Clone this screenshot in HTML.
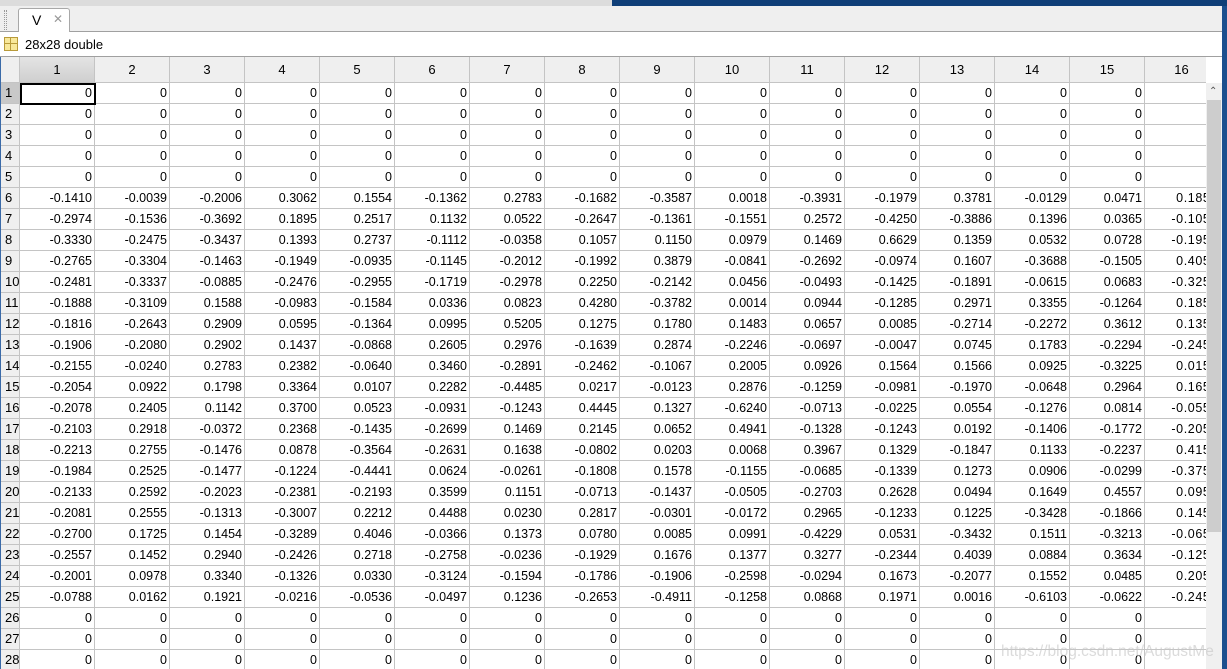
<!DOCTYPE html>
<html><head><meta charset="utf-8"><style>
*{margin:0;padding:0;box-sizing:border-box}
body{width:1227px;height:669px;overflow:hidden;background:#fff;font-family:"Liberation Sans",sans-serif;font-size:12px;color:#000;position:relative}
#top{position:absolute;left:0;top:0;width:1227px;height:6px;background:#0f3f78}
#top .l{position:absolute;left:0;top:0;width:612px;height:6px;background:#dcdcdc}
#tabbar{position:absolute;left:0;top:6px;width:1227px;height:26px;background:#efefef;border-bottom:1px solid #a0a0a0}
#tab{position:absolute;left:18px;top:2px;width:52px;height:25px;background:#fff;border:1px solid #a8a8a8;border-bottom:none;border-radius:3px 3px 0 0;font-size:14px}
#info{position:absolute;left:0;top:32px;width:1227px;height:25px;background:#fff;border-bottom:1px solid #a0a0a0;font-size:13px}
#grid{position:absolute;left:0;top:57px;width:1206px;height:612px;overflow:hidden}
.r{height:21px;white-space:nowrap;display:flex}
.r>div{flex:none;width:75px;height:21px;border-right:1px solid #c4c4c4;border-bottom:1px solid #c4c4c4;text-align:right;padding-right:2px;line-height:20px;overflow:hidden;font-size:12.5px}
.r>div:first-child{width:20px;background:#efefef;text-align:left;padding:0 0 0 5px;font-size:13px}
.h{height:26px}
.h>div{height:26px;background:#efefef;text-align:center;padding:0;line-height:26px;font-size:13px}
.h>div.s{background:linear-gradient(#e4e4e4,#cfcfcf)}
.r>div.sr{background:#c8c8c8}
.r>div:last-child{padding-right:1px;letter-spacing:0.6px}
.h>div:last-child{letter-spacing:0}
#sel{position:absolute;left:20px;top:83px;width:76px;height:22px;border:2px solid #000}
#sb{position:absolute;left:1206px;top:83px;width:16px;height:586px;background:#f0f0f0}
#thumb{position:absolute;left:1207px;top:100px;width:14px;height:432px;background:#cdcdcd}
#rb{position:absolute;left:1222px;top:6px;width:5px;height:663px;background:#1c4f8e}
#lb{position:absolute;left:0;top:57px;width:1px;height:612px;background:#3a6aa8}
#wm{position:absolute;left:1001px;top:643px;font-size:15.5px;color:rgba(200,200,200,.65)}
</style></head><body>
<div id="top"><div class="l"></div></div>
<div id="tabbar"><div style="position:absolute;left:4px;top:4px;width:3px;height:20px;border-left:1px dotted #999;border-right:1px dotted #999"></div>
<div id="tab"><span style="position:absolute;left:13px;top:3px">V</span><span style="position:absolute;left:34px;top:3px;color:#999;font-size:12px">✕</span></div></div>
<div id="info"><div style="position:absolute;left:4px;top:5px;width:14px;height:14px;background:#f8e89a;border:1px solid #b89a3a"><div style="position:absolute;left:5px;top:0;width:1px;height:12px;background:#b89a3a"></div><div style="position:absolute;left:0;top:5px;width:12px;height:1px;background:#b89a3a"></div></div><span style="position:absolute;left:25px;top:5px">28x28 double</span></div>
<div id="grid">
<div class="r h"><div></div><div class="s">1</div><div>2</div><div>3</div><div>4</div><div>5</div><div>6</div><div>7</div><div>8</div><div>9</div><div>10</div><div>11</div><div>12</div><div>13</div><div>14</div><div>15</div><div>16</div></div>
<div class="r"><div class="sr">1</div><div>0</div><div>0</div><div>0</div><div>0</div><div>0</div><div>0</div><div>0</div><div>0</div><div>0</div><div>0</div><div>0</div><div>0</div><div>0</div><div>0</div><div>0</div><div>0</div></div>
<div class="r"><div>2</div><div>0</div><div>0</div><div>0</div><div>0</div><div>0</div><div>0</div><div>0</div><div>0</div><div>0</div><div>0</div><div>0</div><div>0</div><div>0</div><div>0</div><div>0</div><div>0</div></div>
<div class="r"><div>3</div><div>0</div><div>0</div><div>0</div><div>0</div><div>0</div><div>0</div><div>0</div><div>0</div><div>0</div><div>0</div><div>0</div><div>0</div><div>0</div><div>0</div><div>0</div><div>0</div></div>
<div class="r"><div>4</div><div>0</div><div>0</div><div>0</div><div>0</div><div>0</div><div>0</div><div>0</div><div>0</div><div>0</div><div>0</div><div>0</div><div>0</div><div>0</div><div>0</div><div>0</div><div>0</div></div>
<div class="r"><div>5</div><div>0</div><div>0</div><div>0</div><div>0</div><div>0</div><div>0</div><div>0</div><div>0</div><div>0</div><div>0</div><div>0</div><div>0</div><div>0</div><div>0</div><div>0</div><div>0</div></div>
<div class="r"><div>6</div><div>-0.1410</div><div>-0.0039</div><div>-0.2006</div><div>0.3062</div><div>0.1554</div><div>-0.1362</div><div>0.2783</div><div>-0.1682</div><div>-0.3587</div><div>0.0018</div><div>-0.3931</div><div>-0.1979</div><div>0.3781</div><div>-0.0129</div><div>0.0471</div><div>0.1850</div></div>
<div class="r"><div>7</div><div>-0.2974</div><div>-0.1536</div><div>-0.3692</div><div>0.1895</div><div>0.2517</div><div>0.1132</div><div>0.0522</div><div>-0.2647</div><div>-0.1361</div><div>-0.1551</div><div>0.2572</div><div>-0.4250</div><div>-0.3886</div><div>0.1396</div><div>0.0365</div><div>-0.1050</div></div>
<div class="r"><div>8</div><div>-0.3330</div><div>-0.2475</div><div>-0.3437</div><div>0.1393</div><div>0.2737</div><div>-0.1112</div><div>-0.0358</div><div>0.1057</div><div>0.1150</div><div>0.0979</div><div>0.1469</div><div>0.6629</div><div>0.1359</div><div>0.0532</div><div>0.0728</div><div>-0.1950</div></div>
<div class="r"><div>9</div><div>-0.2765</div><div>-0.3304</div><div>-0.1463</div><div>-0.1949</div><div>-0.0935</div><div>-0.1145</div><div>-0.2012</div><div>-0.1992</div><div>0.3879</div><div>-0.0841</div><div>-0.2692</div><div>-0.0974</div><div>0.1607</div><div>-0.3688</div><div>-0.1505</div><div>0.4050</div></div>
<div class="r"><div>10</div><div>-0.2481</div><div>-0.3337</div><div>-0.0885</div><div>-0.2476</div><div>-0.2955</div><div>-0.1719</div><div>-0.2978</div><div>0.2250</div><div>-0.2142</div><div>0.0456</div><div>-0.0493</div><div>-0.1425</div><div>-0.1891</div><div>-0.0615</div><div>0.0683</div><div>-0.3250</div></div>
<div class="r"><div>11</div><div>-0.1888</div><div>-0.3109</div><div>0.1588</div><div>-0.0983</div><div>-0.1584</div><div>0.0336</div><div>0.0823</div><div>0.4280</div><div>-0.3782</div><div>0.0014</div><div>0.0944</div><div>-0.1285</div><div>0.2971</div><div>0.3355</div><div>-0.1264</div><div>0.1850</div></div>
<div class="r"><div>12</div><div>-0.1816</div><div>-0.2643</div><div>0.2909</div><div>0.0595</div><div>-0.1364</div><div>0.0995</div><div>0.5205</div><div>0.1275</div><div>0.1780</div><div>0.1483</div><div>0.0657</div><div>0.0085</div><div>-0.2714</div><div>-0.2272</div><div>0.3612</div><div>0.1350</div></div>
<div class="r"><div>13</div><div>-0.1906</div><div>-0.2080</div><div>0.2902</div><div>0.1437</div><div>-0.0868</div><div>0.2605</div><div>0.2976</div><div>-0.1639</div><div>0.2874</div><div>-0.2246</div><div>-0.0697</div><div>-0.0047</div><div>0.0745</div><div>0.1783</div><div>-0.2294</div><div>-0.2450</div></div>
<div class="r"><div>14</div><div>-0.2155</div><div>-0.0240</div><div>0.2783</div><div>0.2382</div><div>-0.0640</div><div>0.3460</div><div>-0.2891</div><div>-0.2462</div><div>-0.1067</div><div>0.2005</div><div>0.0926</div><div>0.1564</div><div>0.1566</div><div>0.0925</div><div>-0.3225</div><div>0.0150</div></div>
<div class="r"><div>15</div><div>-0.2054</div><div>0.0922</div><div>0.1798</div><div>0.3364</div><div>0.0107</div><div>0.2282</div><div>-0.4485</div><div>0.0217</div><div>-0.0123</div><div>0.2876</div><div>-0.1259</div><div>-0.0981</div><div>-0.1970</div><div>-0.0648</div><div>0.2964</div><div>0.1650</div></div>
<div class="r"><div>16</div><div>-0.2078</div><div>0.2405</div><div>0.1142</div><div>0.3700</div><div>0.0523</div><div>-0.0931</div><div>-0.1243</div><div>0.4445</div><div>0.1327</div><div>-0.6240</div><div>-0.0713</div><div>-0.0225</div><div>0.0554</div><div>-0.1276</div><div>0.0814</div><div>-0.0550</div></div>
<div class="r"><div>17</div><div>-0.2103</div><div>0.2918</div><div>-0.0372</div><div>0.2368</div><div>-0.1435</div><div>-0.2699</div><div>0.1469</div><div>0.2145</div><div>0.0652</div><div>0.4941</div><div>-0.1328</div><div>-0.1243</div><div>0.0192</div><div>-0.1406</div><div>-0.1772</div><div>-0.2050</div></div>
<div class="r"><div>18</div><div>-0.2213</div><div>0.2755</div><div>-0.1476</div><div>0.0878</div><div>-0.3564</div><div>-0.2631</div><div>0.1638</div><div>-0.0802</div><div>0.0203</div><div>0.0068</div><div>0.3967</div><div>0.1329</div><div>-0.1847</div><div>0.1133</div><div>-0.2237</div><div>0.4150</div></div>
<div class="r"><div>19</div><div>-0.1984</div><div>0.2525</div><div>-0.1477</div><div>-0.1224</div><div>-0.4441</div><div>0.0624</div><div>-0.0261</div><div>-0.1808</div><div>0.1578</div><div>-0.1155</div><div>-0.0685</div><div>-0.1339</div><div>0.1273</div><div>0.0906</div><div>-0.0299</div><div>-0.3750</div></div>
<div class="r"><div>20</div><div>-0.2133</div><div>0.2592</div><div>-0.2023</div><div>-0.2381</div><div>-0.2193</div><div>0.3599</div><div>0.1151</div><div>-0.0713</div><div>-0.1437</div><div>-0.0505</div><div>-0.2703</div><div>0.2628</div><div>0.0494</div><div>0.1649</div><div>0.4557</div><div>0.0950</div></div>
<div class="r"><div>21</div><div>-0.2081</div><div>0.2555</div><div>-0.1313</div><div>-0.3007</div><div>0.2212</div><div>0.4488</div><div>0.0230</div><div>0.2817</div><div>-0.0301</div><div>-0.0172</div><div>0.2965</div><div>-0.1233</div><div>0.1225</div><div>-0.3428</div><div>-0.1866</div><div>0.1450</div></div>
<div class="r"><div>22</div><div>-0.2700</div><div>0.1725</div><div>0.1454</div><div>-0.3289</div><div>0.4046</div><div>-0.0366</div><div>0.1373</div><div>0.0780</div><div>0.0085</div><div>0.0991</div><div>-0.4229</div><div>0.0531</div><div>-0.3432</div><div>0.1511</div><div>-0.3213</div><div>-0.0650</div></div>
<div class="r"><div>23</div><div>-0.2557</div><div>0.1452</div><div>0.2940</div><div>-0.2426</div><div>0.2718</div><div>-0.2758</div><div>-0.0236</div><div>-0.1929</div><div>0.1676</div><div>0.1377</div><div>0.3277</div><div>-0.2344</div><div>0.4039</div><div>0.0884</div><div>0.3634</div><div>-0.1250</div></div>
<div class="r"><div>24</div><div>-0.2001</div><div>0.0978</div><div>0.3340</div><div>-0.1326</div><div>0.0330</div><div>-0.3124</div><div>-0.1594</div><div>-0.1786</div><div>-0.1906</div><div>-0.2598</div><div>-0.0294</div><div>0.1673</div><div>-0.2077</div><div>0.1552</div><div>0.0485</div><div>0.2050</div></div>
<div class="r"><div>25</div><div>-0.0788</div><div>0.0162</div><div>0.1921</div><div>-0.0216</div><div>-0.0536</div><div>-0.0497</div><div>0.1236</div><div>-0.2653</div><div>-0.4911</div><div>-0.1258</div><div>0.0868</div><div>0.1971</div><div>0.0016</div><div>-0.6103</div><div>-0.0622</div><div>-0.2450</div></div>
<div class="r"><div>26</div><div>0</div><div>0</div><div>0</div><div>0</div><div>0</div><div>0</div><div>0</div><div>0</div><div>0</div><div>0</div><div>0</div><div>0</div><div>0</div><div>0</div><div>0</div><div>0</div></div>
<div class="r"><div>27</div><div>0</div><div>0</div><div>0</div><div>0</div><div>0</div><div>0</div><div>0</div><div>0</div><div>0</div><div>0</div><div>0</div><div>0</div><div>0</div><div>0</div><div>0</div><div>0</div></div>
<div class="r"><div>28</div><div>0</div><div>0</div><div>0</div><div>0</div><div>0</div><div>0</div><div>0</div><div>0</div><div>0</div><div>0</div><div>0</div><div>0</div><div>0</div><div>0</div><div>0</div><div>0</div></div>
</div>
<div id="sel"></div>
<div id="sb"><div style="position:absolute;left:3px;top:3px;font-size:10px;color:#555">⌃</div></div>
<div id="thumb"></div>
<div id="lb"></div>
<div id="rb"></div>
<div id="wm">https://blog.csdn.net/AugustMe</div>
</body></html>
